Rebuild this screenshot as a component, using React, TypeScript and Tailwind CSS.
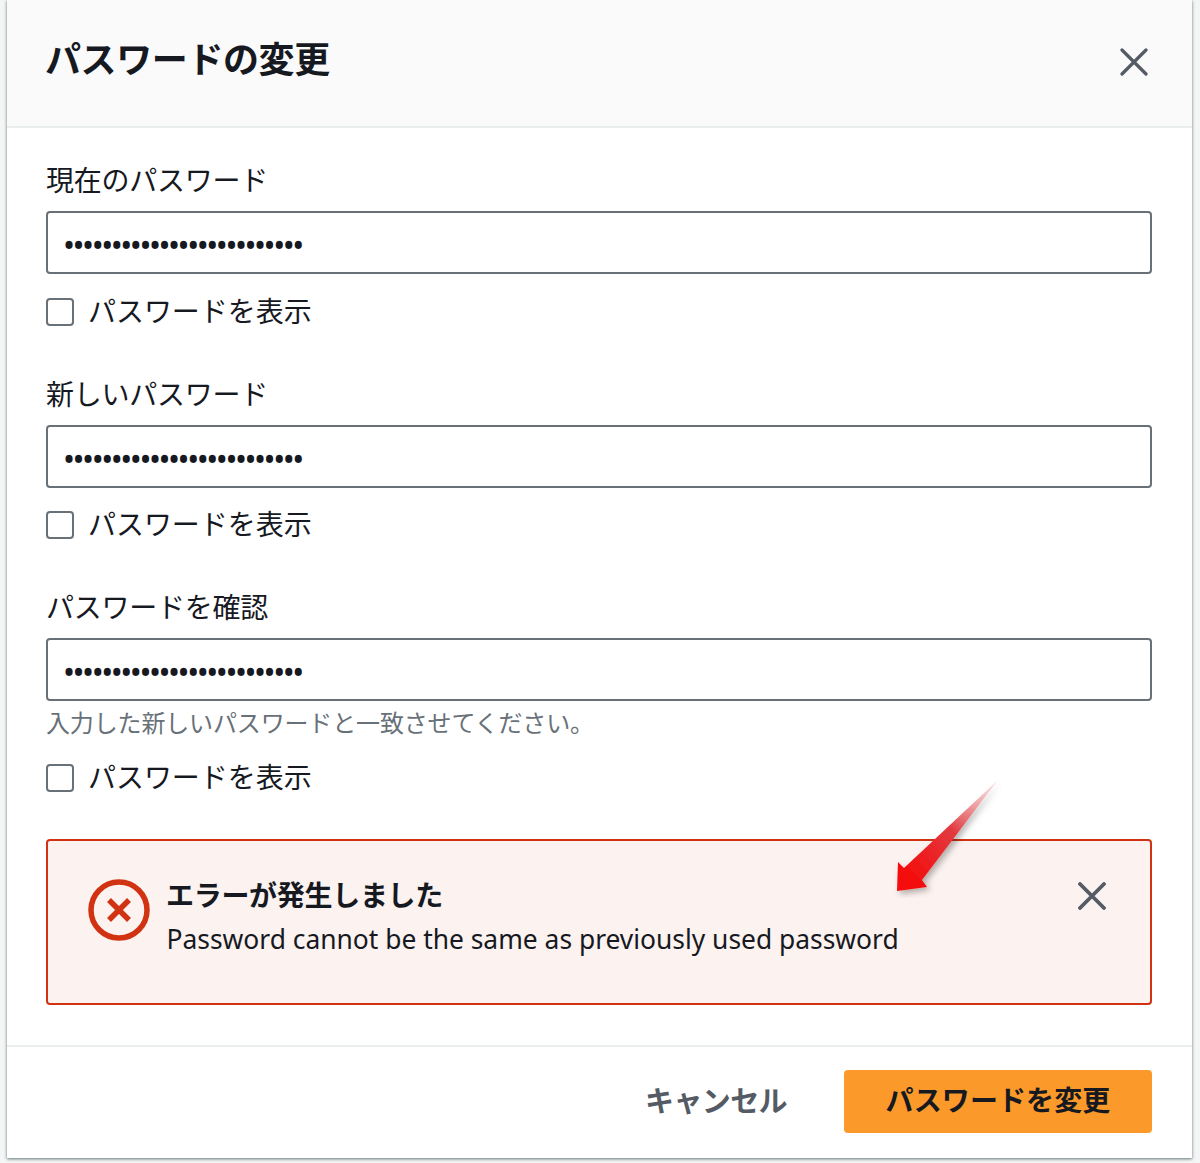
import React from 'react';

const FONT = "font-['Noto_Sans','Noto_Sans_CJK_JP',sans-serif]";

const CloseIcon = ({ className, weight = 3.2 }: { className: string; weight?: number }) => (
  <svg viewBox="0 0 28 28" fill="none" className={className}>
    <path d="M2 2 L26 26 M26 2 L2 26" stroke="#545b64" strokeWidth={weight} strokeLinecap="round" />
  </svg>
);

const ErrorIcon = () => (
  <svg viewBox="0 0 62 62" fill="none" className="w-[62px] h-[62px] shrink-0">
    <circle cx="31" cy="31" r="28" stroke="#d13212" strokeWidth="5.5" />
    <path d="M21 21 L41 41 M41 21 L21 41" stroke="#d13212" strokeWidth="5.5" />
  </svg>
);

const PasswordField = ({ label }: { label: string }) => (
  <>
    <label className="block text-[28px] leading-[40px] text-[#16191f] tracking-[-0.25px]">{label}</label>
    <input
      type="password"
      readOnly
      value="aaaaaaaaaaaaaaaaaaaaaaaaa"
      className="block mt-[11px] w-full h-[63px] px-[15px] pt-[4px] border-2 border-[#687078] rounded-[4px] bg-white text-[32px] tracking-[-2.48px] text-[#16191f] outline-none"
    />
  </>
);

const ShowPassword = ({ className }: { className: string }) => (
  <div className={`flex items-center h-[28px] ${className}`}>
    <span className="block w-[28px] h-[28px] border-2 border-[#687078] rounded-[4px] bg-white" />
    <span className="ml-[14px] pb-[2px] text-[28px] leading-[40px] text-[#16191f] tracking-[-0.05px]">パスワードを表示</span>
  </div>
);

const Arrow = () => (
  <svg viewBox="0 0 110 120" className="absolute left-[892px] top-[778px] w-[110px] h-[120px] pointer-events-none">
    <defs>
      <linearGradient id="arrowFill" x1="0" y1="1" x2="1" y2="0">
        <stop offset="0.1" stopColor="#f50a0a" />
        <stop offset="0.55" stopColor="#e23a3f" />
        <stop offset="1" stopColor="#f0b8b8" stopOpacity="0.35" />
      </linearGradient>
      <filter id="arrowShadow" x="-20%" y="-20%" width="140%" height="140%">
        <feDropShadow dx="3" dy="3" stdDeviation="3" floodColor="#000" floodOpacity="0.3" />
      </filter>
    </defs>
    <path d="M5 113 L6 84 L12 90 L106 2 L30 102 L35 109 Z" fill="url(#arrowFill)" filter="url(#arrowShadow)" />
  </svg>
);

export default function App() {
  return (
    <div className={`relative w-[1200px] h-[1163px] overflow-hidden bg-[#f4f5f5] ${FONT}`}>
      <div className="ml-[7px] w-[1185px] h-[1158px] flex flex-col bg-white shadow-[0_1px_3px_rgba(0,28,36,0.6)]">
        <header className="h-[128px] shrink-0 flex justify-between bg-[#fafafa] border-b-2 border-[#eaeded] pl-[39px] pr-[44px]">
          <h1 className="mt-[36px] -ml-[1px] text-[36px] leading-[48px] font-bold text-[#16191f] tracking-[-0.4px]">パスワードの変更</h1>
          <CloseIcon className="mt-[48px] w-[28px] h-[28px]" />
        </header>

        <div className="flex-1 pl-[39px] pr-[40px] pt-[32px]">
          <PasswordField label="現在のパスワード" />
          <ShowPassword className="mt-[24px]" />

          <div className="mt-[48px]">
            <PasswordField label="新しいパスワード" />
          </div>
          <ShowPassword className="mt-[23px]" />

          <div className="mt-[48px]">
            <PasswordField label="パスワードを確認" />
          </div>
          <p className="mt-[4px] text-[24px] leading-[36px] text-[#687078] tracking-[-0.15px]">入力した新しいパスワードと一致させてください。</p>
          <ShowPassword className="mt-[23px]" />

          <div className="mt-[47px] h-[166px] flex border-2 border-[#d13212] rounded-[4px] bg-[#fcf2ef] pl-[40px] pr-[44px] pt-[38px]">
            <ErrorIcon />
            <div className="ml-[16px] flex-1">
              <div className="text-[28px] leading-[32px] font-bold text-[#16191f] tracking-[-0.3px]">エラーが発生しました</div>
              <div className="mt-[9px] ml-[0.5px] text-[26.4px] leading-[38px] text-[#16191f]">Password cannot be the same as previously used password</div>
            </div>
            <CloseIcon className="mt-[3px] w-[28px] h-[28px]" weight={3.8} />
          </div>
        </div>

        <footer className="h-[113px] shrink-0 flex items-start justify-end border-t-2 border-[#eaeded] pl-[39px] pr-[40px] pt-[23px]">
          <span className="mt-[9px] mr-[57px] text-[29px] leading-[44px] font-bold text-[#545b64] tracking-[-0.6px]">キャンセル</span>
          <button className="w-[308px] h-[63px] pb-[4px] rounded-[4px] bg-[#fb9a2b] text-[28px] font-bold text-[#16191f] tracking-[0.1px]">パスワードを変更</button>
        </footer>
      </div>
      <Arrow />
    </div>
  );
}
